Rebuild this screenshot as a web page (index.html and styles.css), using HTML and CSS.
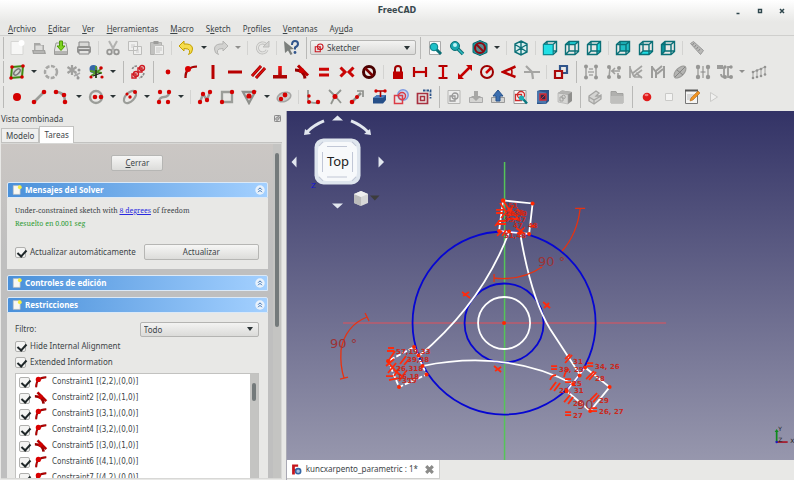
FILE: index.html
```
<!DOCTYPE html>
<html lang="es">
<head>
    <meta charset="UTF-8">
    <meta name="viewport" content="width=device-width, initial-scale=1.0">
    <title>FreeCAD</title>
    <link rel="stylesheet" href="styles.css">
</head>
<body>
    <!-- icon set, 16x16 each -->
    <svg class="sprite" aria-hidden="true">
        <defs>
            <linearGradient id="blade" x2="0" y2="1"><stop stop-color="#f01414"/><stop offset="1" stop-color="#a00000"/></linearGradient>
            <symbol id="i-new" viewBox="0 0 16 16"><path d="M2 1.500h12v13H2z" fill="#f7f7f6" stroke="#d6d6d4"/><circle cx="12.500" cy="3" r="3" fill="#fff"/></symbol>
            <symbol id="i-open" viewBox="0 0 16 16"><path d="M3 3h6l1 2h3v6H3z" fill="#a8a8a6"/><path d="M4.500 5.500h7v5h-7z" fill="#dcdcda"/><path d="M1 10h13l1 4H2z" fill="#a2a2a0"/><path d="M3 12h10" stroke="#c8c8c6"/></symbol>
            <symbol id="i-save" viewBox="0 0 16 16"><path d="M3 3h10l1.500 7v4.500h-13V10z" fill="#e4e4e2" stroke="#9b9b99"/><path d="M2 11h12v3H2z" fill="#b4b4b2"/><path d="M6.500 1h3v5H12l-4 4.500L4 6h2.500z" fill="#7ed321" stroke="#4e9a06"/></symbol>
            <symbol id="i-print" viewBox="0 0 16 16"><path d="M3 2h10v5H3z" fill="#d8d8d6" stroke="#888"/><rect x="1" y="6" width="14" height="7" rx="1.500" fill="#929290"/><path d="M2.500 8.500h11" stroke="#ddd"/><path d="M3 10.500h10v3.500H3z" fill="#e4e4e2" stroke="#888"/></symbol>
            <symbol id="i-cut" viewBox="0 0 16 16"><path d="M4 1l5 9M12 1L7 10" stroke="#b2b2b0" stroke-width="2"/><circle cx="4.500" cy="12" r="2.300" fill="none" stroke="#969694" stroke-width="1.800"/><circle cx="11.500" cy="12" r="2.300" fill="none" stroke="#969694" stroke-width="1.800"/></symbol>
            <symbol id="i-copy" viewBox="0 0 16 16"><path d="M1.500 1.500h9v9h-9zM6.500 6.500h8v8h-8z" fill="#efefee" stroke="#bdbdbb"/><path d="M4 5h4M4 7h3M9 10h3M9 12h3" stroke="#ccc"/></symbol>
            <symbol id="i-paste" viewBox="0 0 16 16"><path d="M1.500 2.500h11v12h-11z" fill="#c2c2c0" stroke="#b0b0ae"/><path d="M4.500 1h5v3h-5z" fill="#9c9c9a"/><path d="M5.500 5.500h9v9h-9z" fill="#efefee" stroke="#c0c0be"/><path d="M7 8h6M7 10h6M7 12h4" stroke="#c8c8c6"/></symbol>
            <symbol id="i-undo" viewBox="0 0 16 16"><path d="M1 6l5-5v3h3q5.500.5 5.500 5t-4 5.500q1.500-1.500 1-4Q11 8.500 6 8.500V11z" fill="#f5dc4c" stroke="#c4a000"/></symbol>
            <symbol id="i-redo" viewBox="0 0 16 16"><path d="M15 6l-5-5v3H7Q1.500 4.500 1.500 9t4 5.500Q4 13 4.500 10.500 5 8.500 10 8.500V11z" fill="#d2d2d0" stroke="#b4b4b2"/></symbol>
            <symbol id="i-refresh" viewBox="0 0 16 16"><path d="M13 10a5 5 0 1 1-1.500-6" fill="none" stroke="#bebebc" stroke-width="3"/><path d="M13 10a5 5 0 1 1-1.500-6" fill="none" stroke="#e4e4e2" stroke-width="1.300"/><path d="M9 7h6V1z" fill="#d4d4d2" stroke="#bcbcba"/></symbol>
            <symbol id="i-whats" viewBox="0 0 16 16"><path d="M1 1l10 8-4 .5 2.500 4.500-2 1L5 10.500 2 13z" fill="#7b7f7c"/><path d="M9 5q0-4 3-4t3 3q0 2-3 3.500v2" fill="none" stroke="#31558c" stroke-width="2"/><circle cx="12" cy="12.500" r="1.400" fill="#31558c"/></symbol>
            <symbol id="i-fit" viewBox="0 0 16 16"><path d="M2.500 1.500h11v13h-11z" fill="#fbfbfb" stroke="#aaa"/><path d="M9 9l5 5" stroke="#0b6f75" stroke-width="3"/><circle cx="7" cy="7" r="3.800" fill="#1fc1c9" stroke="#0b7f86"/></symbol>
            <symbol id="i-zoom" viewBox="0 0 16 16"><path d="M8 8l6 6" stroke="#0b6f75" stroke-width="3.500"/><path d="M8 8l6 6" stroke="#30bcc2" stroke-width="1.500"/><circle cx="6" cy="6" r="4.500" fill="#19a6ae" stroke="#0b6f75"/><circle cx="6" cy="5" r="2" fill="#bff3f5"/></symbol>
            <symbol id="i-style" viewBox="0 0 16 16"><path d="M8 .5l7 3v9l-7 3-7-3v-9z" fill="#16a0a8" stroke="#0c666c"/><circle cx="8" cy="8" r="5" fill="#5b8d90" stroke="#8c0b12" stroke-width="2.200"/><path d="M4.500 4.500l7 7" stroke="#8c0b12" stroke-width="2"/></symbol>
            <symbol id="i-iso" viewBox="0 0 16 16"><path d="M8 1l6 3v8l-6 3-6-3V4zM8 8v7M8 8L2 4.500M8 8l6-3.500M8 1v7M2 12l6-4 6 4" fill="#d9eeee" stroke="#0b7077" stroke-width="1.400"/></symbol>
            <symbol id="i-cube" viewBox="0 0 16 16"><path d="M1.500 4.500l3.500-3h9.500v10l-3.500 3H1.500zM1.500 4.500H11v10M11 4.500l3.500-3M5 1.500V11h9.500M5 11l-3.500 3.500" fill="none" stroke="#0b7077" stroke-width="1.400"/></symbol>
            <symbol id="i-front" viewBox="0 0 16 16"><use href="#i-cube"/><path d="M1.500 4.500H11v10H1.500z" fill="#22dfe5" stroke="#0b8c94"/></symbol>
            <symbol id="i-top" viewBox="0 0 16 16"><path d="M1.500 4.500l3.500-3h9.500l-3.500 3z" fill="#22dfe5"/><use href="#i-cube"/></symbol>
            <symbol id="i-right" viewBox="0 0 16 16"><path d="M11 4.500l3.500-3v10l-3.500 3z" fill="#22dfe5"/><use href="#i-cube"/></symbol>
            <symbol id="i-rear" viewBox="0 0 16 16"><path d="M5 1.500h9.500V11H5z" fill="#20bfc5"/><use href="#i-cube"/></symbol>
            <symbol id="i-bottom" viewBox="0 0 16 16"><path d="M1.500 14.500L5 11h9.500L11 14.500z" fill="#22dfe5"/><use href="#i-cube"/></symbol>
            <symbol id="i-left" viewBox="0 0 16 16"><path d="M1.500 4.500l3.500-3V11l-3.500 3.500z" fill="#0e969d"/><use href="#i-cube"/></symbol>
            <symbol id="i-ruler" viewBox="0 0 16 16"><path d="M1.500 3.500l3-2 10 9-3 4z" fill="#b9b9b7" stroke="#999"/><path d="M5 3L3.500 5M7 5L5.500 7M9 7L7.500 9M11 9l-1.500 2" stroke="#888"/></symbol>

            <symbol id="i-sketch" viewBox="0 0 16 16"><path d="M3 3l11-1-1 11-11 1z" fill="#d3d7cf" stroke="#3f8a12" stroke-width="2"/><ellipse cx="8" cy="8" rx="4" ry="2" transform="rotate(-45 8 8)" fill="none" stroke="#777" stroke-width="1.500"/><g fill="#d40000"><circle cx="3" cy="3" r="1.800"/><circle cx="14" cy="2" r="1.800"/><circle cx="13" cy="13" r="1.800"/><circle cx="2" cy="14" r="1.800"/></g></symbol>
            <symbol id="i-ring" viewBox="0 0 16 16"><circle cx="8" cy="8" r="6" fill="none" stroke="#a7a7a5" stroke-width="2.500" stroke-dasharray="4 1.500"/></symbol>
            <symbol id="i-spark" viewBox="0 0 16 16"><path d="M6 1v10M1.500 3l9 6M10.500 3l-9 6" stroke="#a0a09e" stroke-width="2.200"/><path d="M9 9l4 5M14 9l-6 3" stroke="#aaa" stroke-width="1.500"/><circle cx="13" cy="6" r="1.500" fill="#999"/><circle cx="12" cy="14" r="1.500" fill="#999"/></symbol>
            <symbol id="i-spark-c" viewBox="0 0 16 16"><circle cx="5.500" cy="5" r="4" fill="#3567a8"/><path d="M8 2v12M2 7l12 2M3 12l10-7" stroke="#529a28" stroke-width="1.800"/><path d="M8 6v8M5 12l8-3" stroke="#222" stroke-width="1.300"/><g fill="#c00"><circle cx="13" cy="4" r="1.800"/><circle cx="14" cy="13" r="1.600"/><circle cx="3" cy="13" r="1.600"/></g></symbol>
            <symbol id="i-merge" viewBox="0 0 16 16"><path d="M7 2q-4 0-5 4M14 9q-1 4-5 5" fill="none" stroke="#888" stroke-width="1.600" stroke-dasharray="2.500 1"/><g fill="none" stroke="#cf1a22" stroke-width="1.400"><path d="M8 4h4v4H8z"/><circle cx="12" cy="4" r="2.500"/><path d="M2 10h4v4H2z"/><circle cx="6" cy="10" r="2.500"/></g></symbol>
            <symbol id="i-dot" viewBox="0 0 16 16"><circle cx="8" cy="8" r="2.400" fill="#d40000"/></symbol>
            <symbol id="i-onobj" viewBox="0 0 16 16"><path d="M2.500 14Q2 3 14 2.500" fill="none" stroke="#8a0000" stroke-width="2.200"/><path d="M2.500 14Q2 3 14 2.500" fill="none" stroke="#c40000" stroke-width="1"/><circle cx="5" cy="5" r="3" fill="#d90000"/></symbol>
            <symbol id="i-vert" viewBox="0 0 16 16"><path d="M8 1v14" stroke="#b80000" stroke-width="3"/></symbol>
            <symbol id="i-horiz" viewBox="0 0 16 16"><path d="M1 8h14" stroke="#b80000" stroke-width="3"/></symbol>
            <symbol id="i-par" viewBox="0 0 16 16"><path d="M2 12l9-10M6 14l9-10" stroke="#9c0000" stroke-width="3"/><path d="M2 12l9-10M6 14l9-10" stroke="#df0e0e" stroke-width="1.500"/></symbol>
            <symbol id="i-perp" viewBox="0 0 16 16"><path d="M6.200 2h3.600v9H15v3.500H1V11h5.200z" fill="url(#blade)"/></symbol>
            <symbol id="i-tan" viewBox="0 0 16 16"><path d="M1 6q9 0 10 8.500" fill="none" stroke="#980000" stroke-width="3"/><path d="M4 1.500l10 10" stroke="#b70000" stroke-width="3"/><circle cx="7.500" cy="6.500" r="2.500" fill="#d40000"/></symbol>
            <symbol id="i-eq" viewBox="0 0 16 16"><path d="M3 5.300h10M3 11h10" stroke="#cc0505" stroke-width="3"/></symbol>
            <symbol id="i-sym" viewBox="0 0 16 16"><path d="M1.500 3.500L6 8l-4.500 4.500M14.500 3.500L10 8l4.500 4.500" fill="none" stroke="#c90505" stroke-width="3"/></symbol>
            <symbol id="i-block" viewBox="0 0 16 16"><circle cx="8" cy="8" r="5.500" fill="none" stroke="#480000" stroke-width="3"/><path d="M4 4l8 8" stroke="#7a0000" stroke-width="2.500"/></symbol>
            <symbol id="i-lock" viewBox="0 0 16 16"><path d="M5 8V5a3 3 0 0 1 6 0v3" fill="none" stroke="#a00000" stroke-width="2"/><path d="M3 7.500h10V15H3z" fill="#bd0000"/></symbol>
            <symbol id="i-hdist" viewBox="0 0 16 16"><path d="M2 3v10M14 3v10" stroke="#b00000" stroke-width="2.200"/><path d="M2 8h12" stroke="#c80000" stroke-width="2.200"/></symbol>
            <symbol id="i-vdist" viewBox="0 0 16 16"><path d="M3.500 2h9M3.500 14h9" stroke="#b00000" stroke-width="2.200"/><path d="M8 2v12" stroke="#c80000" stroke-width="2.200"/></symbol>
            <symbol id="i-dist" viewBox="0 0 16 16"><path d="M3 13L13 3" stroke="#c40000" stroke-width="2.500"/><path d="M15 1v6L9 1zM1 15V9l6 6z" fill="#c40000"/></symbol>
            <symbol id="i-radius" viewBox="0 0 16 16"><circle cx="8" cy="8" r="6" fill="none" stroke="#9d0000" stroke-width="2"/><path d="M7 9l5-5" stroke="#d20000" stroke-width="2.500"/></symbol>
            <symbol id="i-angle" viewBox="0 0 16 16"><path d="M14.500 2.500L2 8l12.500 5" fill="none" stroke="#b90000" stroke-width="2.500"/><path d="M10 4q2 4 0 8" fill="none" stroke="#b90000" stroke-width="1.500"/></symbol>
            <symbol id="i-snell" viewBox="0 0 16 16"><path d="M0 8h16M8 8l1 7M2 2l6 6" stroke="#a5a5a3" stroke-width="2.200"/></symbol>
            <symbol id="i-toggle" viewBox="0 0 16 16"><path d="M7 2h7v7H7z" fill="none" stroke="#30558b" stroke-width="2.200"/><path d="M2 7h7v7H2z" fill="#e8e8e6" stroke="#aa0909" stroke-width="2.200"/></symbol>

            <symbol id="i-g1" viewBox="0 0 16 16"><path d="M3 3v10M13 3v10M6 5h4M6 11h4M5 8h6" stroke="#a8a8a6" stroke-width="1.700" fill="none"/><g fill="#969694"><circle cx="3" cy="2.500" r="2"/><circle cx="13" cy="2.500" r="2"/><circle cx="3" cy="13.500" r="2"/><circle cx="13" cy="13.500" r="2"/></g></symbol>
            <symbol id="i-g2" viewBox="0 0 16 16"><path d="M4 4l-1 9M5 7h9M9 4l-3 3 3 3M12 13V9" fill="none" stroke="#a0a09e" stroke-width="1.600"/><g fill="#969694"><circle cx="3" cy="3" r="2"/><circle cx="3" cy="13" r="2"/><circle cx="13" cy="4" r="2"/><circle cx="13" cy="13" r="2"/></g></symbol>
            <symbol id="i-g3" viewBox="0 0 16 16"><path d="M2 2v12M2 4l4 9M5 9l9-7M6 12l8-6M8 9l6 5M6 13h8" stroke="#a3a3a1" stroke-width="1.700"/></symbol>
            <symbol id="i-g4" viewBox="0 0 16 16"><path d="M2 2v12M14 2v12M2 3l4 5v6M6 7l6-5M7 10l6-5" fill="none" stroke="#9d9d9b" stroke-width="2"/></symbol>
            <symbol id="i-g5" viewBox="0 0 16 16"><ellipse cx="8" cy="8" rx="7.500" ry="4" transform="rotate(-45 8 8)" fill="#b4b4b2" stroke="#989896"/><path d="M3 13L13 3M5 6l6 5" stroke="#858583"/></symbol>
            <symbol id="i-g6" viewBox="0 0 16 16"><path d="M3 3v10M13 3v10M8 2v12" stroke="#a5a5a3" stroke-width="1.500"/><path d="M5.500 8h5" stroke="#888"/><g fill="#979795"><circle cx="3" cy="3" r="2.200"/><circle cx="13" cy="3" r="2.200"/><circle cx="3" cy="13" r="2.200"/><circle cx="13" cy="13" r="2.200"/></g></symbol>
            <symbol id="i-g7" viewBox="0 0 16 16"><path d="M0 2h6M0 4h6M7 3v10q-3 0-3-3M14 3h-3v10h3" fill="none" stroke="#9c9c9a" stroke-width="1.800"/><g fill="#969694"><circle cx="8" cy="3" r="1.700"/><circle cx="14" cy="3" r="1.700"/><circle cx="8" cy="13" r="2"/><circle cx="14" cy="13" r="2"/></g></symbol>
            <symbol id="i-g8" viewBox="0 0 16 16"><path d="M2 8v6M6 7v6M10 6v6M14 3v8M2 8l12-5" stroke="#a2a2a0" stroke-width="1"/><g fill="#939391"><circle cx="2" cy="8" r="1.300"/><circle cx="6" cy="6.500" r="1.300"/><circle cx="10" cy="5" r="1.300"/><circle cx="14" cy="3" r="1.300"/><circle cx="2" cy="14" r="1.300"/><circle cx="6" cy="13" r="1.300"/><circle cx="10" cy="12" r="1.300"/><circle cx="14" cy="10.500" r="1.300"/></g></symbol>

            <symbol id="i-point" viewBox="0 0 16 16"><circle cx="8" cy="8" r="4" fill="#d40000"/></symbol>
            <symbol id="i-line" viewBox="0 0 16 16"><path d="M3 13L13 3" stroke="#9b9d99" stroke-width="2.600"/><g fill="#d40000"><circle cx="3" cy="13" r="2.300"/><circle cx="13" cy="3" r="2.300"/></g></symbol>
            <symbol id="i-arc" viewBox="0 0 16 16"><path d="M3 3q9 0 9 10" fill="none" stroke="#9b9d99" stroke-width="2.500"/><g fill="#d40000"><circle cx="3" cy="3" r="2.300"/><circle cx="12" cy="13" r="2.300"/><circle cx="11" cy="6" r="2.300"/></g></symbol>
            <symbol id="i-circle" viewBox="0 0 16 16"><circle cx="8" cy="8" r="6" fill="none" stroke="#9b9d99" stroke-width="2.400"/><g fill="#d40000"><circle cx="7" cy="8" r="2.300"/><circle cx="13" cy="8" r="2.300"/></g></symbol>
            <symbol id="i-ellipse" viewBox="0 0 16 16"><ellipse cx="8" cy="8" rx="7.500" ry="4.300" transform="rotate(-45 8 8)" fill="none" stroke="#9b9d99" stroke-width="2.200"/><g fill="#d40000"><circle cx="13" cy="3" r="2"/><circle cx="8" cy="8" r="1.700"/><circle cx="5" cy="5" r="1.500"/></g></symbol>
            <symbol id="i-bspline" viewBox="0 0 16 16"><path d="M3 13q0-5 5-5t5-5" fill="none" stroke="#9b9d99" stroke-width="2.400"/><g fill="#d40000"><circle cx="4" cy="3" r="2.200"/><circle cx="13" cy="3" r="2.200"/><circle cx="3" cy="13" r="2.200"/><circle cx="12" cy="13" r="2.200"/></g></symbol>
            <symbol id="i-poly" viewBox="0 0 16 16"><path d="M3 13l3-8 4 6 3-8" fill="none" stroke="#9b9d99" stroke-width="2.400"/><g fill="#d40000"><circle cx="3" cy="13" r="2.200"/><circle cx="6" cy="5" r="2.200"/><circle cx="10" cy="11" r="2.200"/><circle cx="13" cy="3" r="2.200"/></g></symbol>
            <symbol id="i-rect" viewBox="0 0 16 16"><path d="M3 3h10v10H3z" fill="none" stroke="#9b9d99" stroke-width="2.300"/><g fill="#d40000"><circle cx="3" cy="13" r="2.200"/><circle cx="13" cy="3" r="2.200"/></g></symbol>
            <symbol id="i-tri" viewBox="0 0 16 16"><path d="M2 3h12L8 14z" fill="none" stroke="#8f918d" stroke-width="2.300"/><g fill="#d40000"><circle cx="8" cy="7" r="2.600"/><circle cx="13" cy="3" r="2.200"/></g></symbol>
            <symbol id="i-slot" viewBox="0 0 16 16"><ellipse cx="8" cy="8" rx="7" ry="4.500" transform="rotate(-20 8 8)" fill="#cbcbc9" stroke="#a5a5a3" stroke-width="1.500"/><g fill="#d40000"><circle cx="5" cy="10" r="2.200"/><circle cx="9" cy="6" r="2.400"/></g></symbol>
            <symbol id="i-fillet" viewBox="0 0 16 16"><path d="M3 1v10q0 3 10 3" fill="none" stroke="#9b9d99" stroke-width="2"/><g fill="#d40000"><circle cx="4" cy="13" r="2"/><circle cx="4" cy="7" r="1.700"/><circle cx="13" cy="13" r="2.200"/></g></symbol>
            <symbol id="i-trim" viewBox="0 0 16 16"><path d="M2 1l6 6M8 7l6-6M8 7l-4 8M9 8l5 6" stroke="#92948f" stroke-width="1.800"/><circle cx="8" cy="7.500" r="2.500" fill="#d40000"/></symbol>
            <symbol id="i-extend" viewBox="0 0 16 16"><path d="M3 13l9-9" stroke="#8e908c" stroke-width="2.500"/><path d="M8 2h6v6" fill="none" stroke="#8e908c" stroke-width="1.700"/><g fill="#d40000"><circle cx="3" cy="13" r="2.300"/><circle cx="8" cy="8" r="2"/></g></symbol>
            <symbol id="i-ext" viewBox="0 0 16 16"><path d="M2 9l4-3h9v5l-3 3.500H2z" fill="#264f88"/><path d="M2 9l4-3h9l-3 3z" fill="#4b7ebd"/><path d="M5 2h9M9.500 2v6" stroke="#a00" stroke-width="1.600"/><circle cx="5" cy="2" r="1.700" fill="#d40000"/><circle cx="14" cy="2" r="1.700" fill="#d40000"/></symbol>
            <symbol id="i-carbon" viewBox="0 0 16 16"><circle cx="10" cy="6" r="5.200" fill="#c9d6f0" stroke="#7e9ae0" stroke-width="1.500"/><path d="M1.500 6.500h8v8h-8z" fill="none" stroke="#dc3c46" stroke-width="1.500"/><circle cx="9" cy="7" r="3.500" fill="none" stroke="#dc3c46" stroke-width="1.400"/></symbol>
            <symbol id="i-constr" viewBox="0 0 16 16"><path d="M7 1.500h7.500v8" fill="none" stroke="#2c548a" stroke-width="1.800" stroke-dasharray="2.500 1"/><path d="M1.500 4.500h10v10h-10z" fill="none" stroke="#a83040" stroke-width="1.700"/><path d="M4.500 7.500h4v4h-4z" fill="none" stroke="#a83040" stroke-width="1.500"/></symbol>
            <symbol id="i-leave" viewBox="0 0 16 16"><path d="M2 1.500h12v13H2z" fill="#ededec" stroke="#b6b6b4"/><path d="M4 7h5v5H4z" fill="none" stroke="#999" stroke-width="1.300"/><circle cx="9" cy="7" r="3" fill="none" stroke="#999" stroke-width="1.300"/></symbol>
            <symbol id="i-down" viewBox="0 0 16 16"><path d="M1.500 8.500h13v5h-13z" fill="#d4d4d2" stroke="#aaa"/><path d="M6 2h4v5h3l-5 5-5-5h3z" fill="#a7a7a5"/></symbol>
            <symbol id="i-up" viewBox="0 0 16 16"><path d="M1.500 8.500h13v5h-13z" fill="#d4d4d2" stroke="#999"/><path d="M6 12h4V7h3L8 1 3 7h3z" fill="#3b6eaf" stroke="#28528a"/></symbol>
            <symbol id="i-view" viewBox="0 0 16 16"><path d="M2 1.500h12v13H2z" fill="#fafafa" stroke="#999"/><path d="M3.500 5.500h6v6h-6z" fill="none" stroke="#cf2a2a" stroke-width="1.300"/><circle cx="9" cy="6" r="3.500" fill="none" stroke="#cf2a2a" stroke-width="1.300"/><path d="M11 10l4 4.500" stroke="#0a7880" stroke-width="2.500"/><circle cx="9.500" cy="9" r="2.600" fill="#1daeb5"/></symbol>
            <symbol id="i-section" viewBox="0 0 16 16"><path d="M2 2l3-1h9v11l-3 3H2z" fill="#2c548a"/><path d="M2 2l9 1.500V15L2 13.500z" fill="#4b77ad"/><path d="M5 5h6v6H5z" fill="#312a4a" stroke="#d22b36" stroke-width="1.400"/><path d="M5 11l6-6" stroke="#d22b36"/></symbol>
            <symbol id="i-map" viewBox="0 0 16 16"><path d="M1 4l4-2.500 10 1.500v9L11 15z" fill="#8f8f8d"/><path d="M1 4l10 1.500V15L1 13z" fill="#d6d6d4" stroke="#aaa" stroke-width=".6"/><path d="M1 4l4-2.500 10 1.500-4 2.500z" fill="#b4b4b2"/><path d="M3 8h3v4H3z" fill="none" stroke="#a2a2a0"/><circle cx="6.500" cy="8" r="1.800" fill="none" stroke="#a2a2a0"/></symbol>
            <symbol id="i-part" viewBox="0 0 16 16"><path d="M2 7l7-5 3 2-3 3 3 0 2-1v4l-7 5-5-3z" fill="#d4d4d2" stroke="#a5a5a3" stroke-width="1.300"/><path d="M2 8l5 3 7-4M7 11v4" fill="none" stroke="#a5a5a3" stroke-width="1.300"/></symbol>
            <symbol id="i-folder" viewBox="0 0 16 16"><path d="M2 2.500h5l1 2h6v9.500H2z" fill="#b0b0ae" stroke="#a2a2a0"/><path d="M2 7h12v7H2z" fill="#bfbfbd"/></symbol>
            <symbol id="i-rec" viewBox="0 0 16 16"><circle cx="8" cy="8" r="4.300" fill="#e01b1b"/><ellipse cx="7.500" cy="6" rx="2" ry="1.200" fill="#f47a7a"/></symbol>
            <symbol id="i-stop" viewBox="0 0 16 16"><path d="M4.500 4.500h7v7h-7z" fill="#f4f4f3" stroke="#cacac8"/></symbol>
            <symbol id="i-macro" viewBox="0 0 16 16"><path d="M1.500 1.500h12v13h-12z" fill="#f5f5f4" stroke="#777"/><path d="M1 1.500h13" stroke="#555" stroke-width="2"/><path d="M3 6h7M3 8h5M3 10h4" stroke="#bbb"/><path d="M6 12l1-3 7-7 2 2-7 7z" fill="#ef9322" stroke="#b0681a" stroke-width=".6"/></symbol>
            <symbol id="i-play" viewBox="0 0 16 16"><path d="M4.500 3.500l7 4.500-7 4.500z" fill="#f0f0ef" stroke="#cbcbc9"/></symbol>
            <symbol id="i-sk" viewBox="0 0 16 16"><path d="M2 6h8v8H2z" fill="none" stroke="#cb1620" stroke-width="1.700"/><circle cx="10" cy="6" r="4.500" fill="none" stroke="#cb1620" stroke-width="1.700"/><path d="M5 11l5-5" stroke="#cb1620"/></symbol>
            <symbol id="i-task" viewBox="0 0 16 16"><path d="M2 1h11v14H2z" fill="#f8f8f2" stroke="#bbb"/><circle cx="12.500" cy="3.500" r="3" fill="#f7ee3e"/></symbol>
            <symbol id="i-fold" viewBox="0 0 16 16"><circle cx="8" cy="8" r="7.500" fill="#e9f2fb"/><path d="M5 7.500l3-3 3 3M5 11.500l3-3 3 3" fill="none" stroke="#3971b4" stroke-width="1.600"/></symbol>
        </defs>
    </svg>

    <header class="titlebar">
        <h1>FreeCAD</h1>
        <div class="window-btns">
            <button aria-label="Minimizar"><svg viewBox="0 0 8 8"><path d="M2.500 6.500h3" stroke="#2e464c" stroke-width="1.500"/></svg></button>
            <button aria-label="Maximizar"><svg viewBox="0 0 8 8"><path d="M2.500 2.500h3v3h-3z" fill="none" stroke="#2e464c" stroke-width="1.400"/></svg></button>
            <button aria-label="Cerrar ventana"><svg viewBox="0 0 8 8"><path d="M2 2l4 4M6 2L2 6" stroke="#2e464c" stroke-width="1.500"/></svg></button>
        </div>
    </header>

    <nav class="menubar">
        <a href="#"><u>A</u>rchivo</a>
        <a href="#"><u>E</u>ditar</a>
        <a href="#"><u>V</u>er</a>
        <a href="#"><u>H</u>erramientas</a>
        <a href="#"><u>M</u>acro</a>
        <a href="#">S<u>k</u>etch</a>
        <a href="#">P<u>r</u>ofiles</a>
        <a href="#"><u>V</u>entanas</a>
        <a href="#">Ay<u>u</u>da</a>
    </nav>

    <div class="toolbars">
        <div class="toolbar row-file">
            <i class="handle"></i>
            <button aria-label="Nuevo"><svg><use href="#i-new"/></svg></button>
            <button aria-label="Abrir"><svg><use href="#i-open"/></svg></button>
            <button aria-label="Guardar"><svg><use href="#i-save"/></svg></button>
            <button aria-label="Imprimir"><svg><use href="#i-print"/></svg></button>
            <i class="sep"></i>
            <button aria-label="Cortar"><svg><use href="#i-cut"/></svg></button>
            <button aria-label="Copiar"><svg><use href="#i-copy"/></svg></button>
            <button aria-label="Pegar"><svg><use href="#i-paste"/></svg></button>
            <i class="sep"></i>
            <button aria-label="Deshacer"><svg><use href="#i-undo"/></svg></button>
            <button class="more" aria-label="Lista deshacer"></button>
            <button aria-label="Rehacer"><svg><use href="#i-redo"/></svg></button>
            <button class="more off" aria-label="Lista rehacer"></button>
            <i class="sep"></i>
            <button aria-label="Refrescar"><svg><use href="#i-refresh"/></svg></button>
            <i class="sep"></i>
            <button aria-label="Ayuda"><svg><use href="#i-whats"/></svg></button>
            <i class="handle"></i>
            <div class="combo workbench">
                <svg><use href="#i-sk"/></svg>
                <select aria-label="Banco de trabajo"><option>Sketcher</option></select>
            </div>
            <i class="handle"></i>
            <button aria-label="Ajustar todo"><svg><use href="#i-fit"/></svg></button>
            <button aria-label="Ajustar selección"><svg><use href="#i-zoom"/></svg></button>
            <button aria-label="Estilo"><svg><use href="#i-style"/></svg></button>
            <button class="more" aria-label="Estilos"></button>
            <i class="sep"></i>
            <button aria-label="Isométrica"><svg><use href="#i-iso"/></svg></button>
            <i class="sep"></i>
            <button aria-label="Frontal"><svg><use href="#i-front"/></svg></button>
            <button aria-label="Superior"><svg><use href="#i-top"/></svg></button>
            <button aria-label="Derecha"><svg><use href="#i-right"/></svg></button>
            <i class="sep"></i>
            <button aria-label="Posterior"><svg><use href="#i-rear"/></svg></button>
            <button aria-label="Inferior"><svg><use href="#i-bottom"/></svg></button>
            <button aria-label="Izquierda"><svg><use href="#i-left"/></svg></button>
            <i class="sep"></i>
            <button aria-label="Medir"><svg><use href="#i-ruler"/></svg></button>
        </div>

        <div class="toolbar row-constraints">
            <i class="handle"></i>
            <button aria-label="Croquis"><svg><use href="#i-sketch"/></svg></button>
            <button class="more" aria-label="Opciones de croquis"></button>
            <button aria-label="Cerrar forma"><svg><use href="#i-ring"/></svg></button>
            <button aria-label="Conectar"><svg><use href="#i-spark"/></svg></button>
            <button aria-label="Seleccionar"><svg><use href="#i-spark-c"/></svg></button>
            <button class="more" aria-label="Más selección"></button>
            <i class="handle"></i>
            <button aria-label="Espacio virtual"><svg><use href="#i-merge"/></svg></button>
            <i class="handle"></i>
            <button aria-label="Coincidente"><svg><use href="#i-dot"/></svg></button>
            <button aria-label="Punto en objeto"><svg><use href="#i-onobj"/></svg></button>
            <button aria-label="Vertical"><svg><use href="#i-vert"/></svg></button>
            <button aria-label="Horizontal"><svg><use href="#i-horiz"/></svg></button>
            <button aria-label="Paralelo"><svg><use href="#i-par"/></svg></button>
            <button aria-label="Perpendicular"><svg><use href="#i-perp"/></svg></button>
            <button aria-label="Tangente"><svg><use href="#i-tan"/></svg></button>
            <button aria-label="Igual"><svg><use href="#i-eq"/></svg></button>
            <button aria-label="Simétrico"><svg><use href="#i-sym"/></svg></button>
            <button aria-label="Bloquear"><svg><use href="#i-block"/></svg></button>
            <i class="sep"></i>
            <button aria-label="Fijar"><svg><use href="#i-lock"/></svg></button>
            <button aria-label="Distancia horizontal"><svg><use href="#i-hdist"/></svg></button>
            <button aria-label="Distancia vertical"><svg><use href="#i-vdist"/></svg></button>
            <button aria-label="Distancia"><svg><use href="#i-dist"/></svg></button>
            <button aria-label="Radio"><svg><use href="#i-radius"/></svg></button>
            <button aria-label="Ángulo"><svg><use href="#i-angle"/></svg></button>
            <button aria-label="Refracción"><svg><use href="#i-snell"/></svg></button>
            <i class="sep"></i>
            <button aria-label="Alternar restricción"><svg><use href="#i-toggle"/></svg></button>
            <i class="handle"></i>
            <button aria-label="Seleccionar asociadas"><svg><use href="#i-g1"/></svg></button>
            <button aria-label="Seleccionar elementos"><svg><use href="#i-g2"/></svg></button>
            <button aria-label="Redundantes"><svg><use href="#i-g3"/></svg></button>
            <button aria-label="Conflictos"><svg><use href="#i-g4"/></svg></button>
            <button aria-label="Geometría interna"><svg><use href="#i-g5"/></svg></button>
            <button aria-label="Simetría"><svg><use href="#i-g6"/></svg></button>
            <button aria-label="Clonar"><svg><use href="#i-g7"/></svg></button>
            <button class="more off" aria-label="Más copias"></button>
            <button aria-label="Matriz"><svg><use href="#i-g8"/></svg></button>
        </div>

        <div class="toolbar row-geometry">
            <i class="handle"></i>
            <button aria-label="Punto"><svg><use href="#i-point"/></svg></button>
            <button aria-label="Línea"><svg><use href="#i-line"/></svg></button>
            <button aria-label="Arco"><svg><use href="#i-arc"/></svg></button>
            <button class="more" aria-label="Más arcos"></button>
            <button aria-label="Círculo"><svg><use href="#i-circle"/></svg></button>
            <button class="more" aria-label="Más círculos"></button>
            <button aria-label="Elipse"><svg><use href="#i-ellipse"/></svg></button>
            <button class="more" aria-label="Más cónicas"></button>
            <button aria-label="B-spline"><svg><use href="#i-bspline"/></svg></button>
            <button class="more" aria-label="Más B-splines"></button>
            <i class="sep"></i>
            <button aria-label="Polilínea"><svg><use href="#i-poly"/></svg></button>
            <button aria-label="Rectángulo"><svg><use href="#i-rect"/></svg></button>
            <button aria-label="Polígono"><svg><use href="#i-tri"/></svg></button>
            <button class="more" aria-label="Más polígonos"></button>
            <button aria-label="Ranura"><svg><use href="#i-slot"/></svg></button>
            <i class="sep"></i>
            <button aria-label="Redondeo"><svg><use href="#i-fillet"/></svg></button>
            <button aria-label="Recortar"><svg><use href="#i-trim"/></svg></button>
            <button aria-label="Extender"><svg><use href="#i-extend"/></svg></button>
            <button aria-label="Geometría externa"><svg><use href="#i-ext"/></svg></button>
            <button aria-label="Copia de carbón"><svg><use href="#i-carbon"/></svg></button>
            <button aria-label="Construcción"><svg><use href="#i-constr"/></svg></button>
            <i class="handle"></i>
            <button aria-label="Nuevo croquis"><svg><use href="#i-leave"/></svg></button>
            <button aria-label="Editar croquis"><svg><use href="#i-down"/></svg></button>
            <button aria-label="Salir del croquis"><svg><use href="#i-up"/></svg></button>
            <button aria-label="Ver croquis"><svg><use href="#i-view"/></svg></button>
            <button aria-label="Ver sección"><svg><use href="#i-section"/></svg></button>
            <button aria-label="Mapear croquis"><svg><use href="#i-map"/></svg></button>
            <i class="handle"></i>
            <button aria-label="Pieza"><svg><use href="#i-part"/></svg></button>
            <button aria-label="Grupo"><svg><use href="#i-folder"/></svg></button>
            <i class="handle"></i>
            <button aria-label="Grabar macro"><svg><use href="#i-rec"/></svg></button>
            <button aria-label="Parar macro"><svg><use href="#i-stop"/></svg></button>
            <button aria-label="Macros"><svg><use href="#i-macro"/></svg></button>
            <button aria-label="Ejecutar macro"><svg><use href="#i-play"/></svg></button>
        </div>
    </div>

    <main class="workspace">
        <aside class="panel">
            <div class="panel-title">
                <span>Vista combinada</span>
                <button aria-label="Desacoplar"><svg viewBox="0 0 8 8"><rect x=".5" y=".5" width="7" height="7" rx="1" fill="#ddd" stroke="#777"/><circle cx="3.500" cy="4.500" r="1.500" fill="none" stroke="#777"/><path d="M4 2h2v2" fill="none" stroke="#777"/></svg></button>
            </div>
            <div class="tabs">
                <button>Modelo</button>
                <button class="current">Tareas</button>
            </div>
            <div class="scroll">
                <div class="tasks">
                    <button class="btn close"><u>C</u>errar</button>

                    <section class="task">
                        <h2><svg><use href="#i-task"/></svg>Mensajes del Solver<svg class="fold"><use href="#i-fold"/></svg></h2>
                        <div class="task-body">
                            <p class="msg">Under-constrained sketch with <a href="#">8 degrees</a> of freedom</p>
                            <p class="msg solved">Resuelto en 0.001 seg</p>
                            <div class="split update">
                                <label><input type="checkbox" checked>Actualizar automáticamente</label>
                                <button class="btn">Actualizar</button>
                            </div>
                        </div>
                    </section>

                    <section class="task">
                        <h2><svg><use href="#i-task"/></svg>Controles de edición<svg class="fold"><use href="#i-fold"/></svg></h2>
                    </section>

                    <section class="task">
                        <h2><svg><use href="#i-task"/></svg>Restricciones<svg class="fold"><use href="#i-fold"/></svg></h2>
                        <div class="task-body">
                            <div class="split filter">
                                <label for="filtro">Filtro:</label>
                                <div class="combo"><select id="filtro"><option>Todo</option></select></div>
                            </div>
                            <label><input type="checkbox" checked>Hide Internal Alignment</label>
                            <label><input type="checkbox" checked>Extended Information</label>
                            <div class="list">
                                <ul>
                                    <li><label><input type="checkbox" checked><svg><use href="#i-onobj"/></svg>Constraint1 [(2,2),(0,0)]</label></li>
                                    <li><label><input type="checkbox" checked><svg><use href="#i-tan"/></svg>Constraint2 [(2,0),(1,0)]</label></li>
                                    <li><label><input type="checkbox" checked><svg><use href="#i-onobj"/></svg>Constraint3 [(3,1),(0,0)]</label></li>
                                    <li><label><input type="checkbox" checked><svg><use href="#i-onobj"/></svg>Constraint4 [(3,2),(0,0)]</label></li>
                                    <li><label><input type="checkbox" checked><svg><use href="#i-tan"/></svg>Constraint5 [(3,0),(1,0)]</label></li>
                                    <li><label><input type="checkbox" checked><svg><use href="#i-onobj"/></svg>Constraint6 [(4,1),(0,0)]</label></li>
                                    <li><label><input type="checkbox" checked><svg><use href="#i-onobj"/></svg>Constraint7 [(4,2),(0,0)]</label></li>
                                </ul>
                                <div class="bar"><i></i></div>
                            </div>
                        </div>
                    </section>
                </div>
                <div class="bar main-bar"><i></i></div>
            </div>
        </aside>

        <section class="viewer">
            <svg class="scene" viewBox="287 111 507 349" preserveAspectRatio="xMidYMid slice">
                <!-- axes -->
                <path d="M504.500 162v298" stroke="#55c458" stroke-width="1.500"/>
                <path d="M343 323h323" stroke="#bd5b6d" stroke-width="1.300"/>
                <!-- construction circles -->
                <g fill="none" stroke="#0606d2" stroke-width="1.800">
                    <circle cx="504" cy="323" r="91.500"/>
                    <circle cx="504" cy="323" r="39.500"/>
                </g>
                <!-- profile -->
                <g fill="none" stroke="#fff" stroke-width="1.800">
                    <circle cx="504" cy="323" r="26"/>
                    <path d="M509 232Q482 303 419 356"/>
                    <path d="M520 233Q531 298 550 329L580 375"/>
                    <path d="M422 366Q506 349 573 384"/>
                    <path d="M503 200.500l29.500 3L529 234l-30-3z"/>
                    <path d="M414 347l12.500 27.500L399 387l-11-26z" stroke-dasharray="5 2"/>
                    <path d="M585 367.500L609.500 387 590 411l-23.500-20z"/>
                </g>
                <g fill="none" stroke="#e83210" stroke-width="1.300">
                    <path d="M580 209q-3 25-18 42M542 267q-21 14-48 11M575 208.500h10M494 274v8"/>
                    <path d="M367 317q-22 9-26 33-1 16 3 28M365 313l4 8M340 379l8-2"/>
                </g>
                <g class="angle">
                    <text x="538" y="266">90 °</text>
                    <text x="330" y="348">90 °</text>
                    <text class="small" x="577" y="409">90</text>
                </g>
                <!-- constraint marks -->
                <g stroke="#ff2a0c" stroke-width="1.800" fill="none">
                    <path d="M462 292l8 6M463 296l6-4M543 302l7 6M544 308l5-5M494 366l7 6M495 371l6-4"/>
                    <path d="M496 210h7M496 213h7M498 221h8M497 224h9M500 203l6 9M504 202l8 12M508 208l9 8M513 205l-5 12M501 218l8-9M495 226l4-5M506 215h12M507 219h11M511 210l8 10M517 209l7 7M497 236l5-5M502 236l4-6M516 228l9 6M524 228l-7 6"/>
                    <path d="M388 348h6M387 351h7M389 360l6-9M386 366l8-7M387 361l8 9M388 373l8-10M394 376l6-9M386 376h7M400 364l6-8M404 365l5-6M394 370l9 7M399 381l7-10M389 380l9-2"/>
                    <path d="M565 359l5-5M565 363l7-8M551 366h6M551 369h6M587 363h6M587 366h6M565 379h6M565 382h6M586 379l8-8M589 380l7-8M550 390l6-8M554 391l6-8M550 380q1-5 6-5M564 377q1-6 5-8M590 400l7-7M593 402l6-7M564 402l6-7M568 404l5-7M565 412h6M565 415h6M591 408h6M591 411h6"/>
                </g>
                <g class="tags">
                    <text x="508" y="208">51</text><text x="505" y="216">26,49</text><text x="514" y="215">33</text><text x="504" y="222">45,47</text><text x="513" y="228">47, 48</text><text x="504" y="238">51,48</text>
                    <text x="396" y="354">57,19,33</text><text x="407" y="362">39,38</text><text x="396" y="371">26,318</text><text x="397" y="379">16,18</text><text x="402" y="383">319</text>
                    <text x="573" y="364">31</text><text x="595" y="369">34, 26</text><text x="595" y="381">28</text><text x="559" y="372">38, 25</text><text x="572" y="386">25</text><text x="559" y="393">28, 31</text><text x="599" y="403">29</text><text x="573" y="406">28</text><text x="573" y="418">27</text><text x="599" y="414">26, 27</text>
                </g>
                <g fill="#ff2600">
                    <circle cx="504" cy="323" r="2"/><circle cx="503" cy="200.500" r="2.200"/><circle cx="532.500" cy="203.500" r="2"/><circle cx="529" cy="234" r="2"/><circle cx="499" cy="231" r="2"/><circle cx="509" cy="231.500" r="2"/><circle cx="520" cy="233" r="2"/><circle cx="533" cy="226" r="1.500"/>
                    <circle cx="414" cy="347" r="2"/><circle cx="418.500" cy="355.500" r="2"/><circle cx="422.500" cy="366" r="2"/><circle cx="426.500" cy="374.500" r="2"/><circle cx="399" cy="387" r="2"/><circle cx="388" cy="361" r="2"/>
                    <circle cx="585" cy="367.500" r="2"/><circle cx="579.500" cy="375.500" r="2"/><circle cx="573" cy="384" r="2"/><circle cx="566.500" cy="391" r="2"/><circle cx="609.500" cy="387" r="2"/><circle cx="590" cy="411" r="2"/>
                </g>
                <!-- navigation cube -->
                <g fill="#e2e7ef">
                    <path d="M332 120.500l5.500-5 5.500 5zM332 203.500l5.500 5 5.500-5zM296.500 156.500v11l-5-5.500zM378.500 156.500v11l5.500-5.500z"/>
                    <path d="M304 135l1-6 6 5zM371 135l-1-6-6 5z"/>
                </g>
                <path d="M307 132q7-7 17-11M368 132q-7-7-17-11" fill="none" stroke="#e2e7ef" stroke-width="3"/>
                <rect x="314.500" y="138.500" width="46" height="46" rx="9" fill="#dfe6ee"/>
                <rect x="318" y="142" width="39" height="39" rx="8" fill="#f7f9fb"/>
                <path d="M327 146.500h20M327 177h20M322.500 152v20M352.500 152v20M319 146l4-4M352 142l4 4M319 177l4 4M352 181l4-4" fill="none" stroke="#c1c7d6"/>
                <text class="cube" x="338" y="166">Top</text>
                <text class="axis-z" x="311" y="188">Z</text>
                <path d="M354 194l7-3 7 3v9l-7 3-7-3z" fill="#d7d7d7"/><path d="M354 194l7 3v9l-7-3z" fill="#bbb"/><path d="M354 194l7-3 7 3-7 3z" fill="#f0f0f0"/>
                <path d="M370 195.500h9.500l-4.700 5z" fill="#3c3c3c"/>
                <!-- origin cross -->
                <path d="M776.500 442v-11" stroke="#0f8a1c" stroke-width="1.700"/><path d="M776.500 442h11" stroke="#a5182a" stroke-width="1.700"/><path d="M774.500 432l2-3 2 3z" fill="#0f8a1c"/><circle cx="776.500" cy="442" r="1.200" fill="#1a1ac0"/>
                <g class="axes"><text x="778" y="431">Y</text><text x="778" y="442">Z</text><text x="790" y="443">X</text></g>
            </svg>
            <div class="doc-tabs">
                <div class="doc-tab">
                    <svg viewBox="0 0 10 10"><path d="M1 .5h5.500v2h-3v2h2v2h-2v3H1z" fill="#c5161d"/><circle cx="6.500" cy="6.500" r="2.300" fill="#aac3e0" stroke="#3465a4" stroke-width="1.400"/></svg>
                    <span>kuncxarpento_parametric : 1*</span>
                    <button aria-label="Cerrar documento"><svg viewBox="0 0 10 10"><path d="M2 2l6 6M8 2L2 8" stroke="#8b8b89" stroke-width="2.800"/></svg></button>
                </div>
            </div>
        </section>
    </main>
</body>
</html>
```

FILE: styles.css
```
*{
    margin: 0;
    padding: 0;
    box-sizing: border-box;
}
body{
    display: flex;
    flex-direction: column;
    height: 100vh;
    overflow: hidden;
    background: #e8e8e6;
    color: #3c4447;
    font: 8px/12px "Noto Sans", "Open Sans", sans-serif;
}
button,select,input{
    font: inherit;
    color: inherit;
    border: none;
    background: none;
}
ul{
    list-style: none;
}
svg{
    display: block;
    flex: none;
}
.sprite{
    position: absolute;
    width: 0;
    height: 0;
}

/* title + menu */
.titlebar{
    display: flex;
    align-items: center;
    height: 22px;
    padding: 0 6px 0 62px;
    background: linear-gradient(#ffffff, #e8e8e6);
}
.titlebar h1{
    flex: 1;
    text-align: center;
    font: bold 8px/12px "DejaVu Sans", sans-serif;
    color: #39494e;
}
.window-btns{
    display: flex;
    gap: 10px;
}
.window-btns button{
    width: 12px;
    height: 12px;
    padding: 2px;
}
.menubar{
    display: flex;
    gap: 12px;
    height: 14px;
    padding: 1px 8px 0;
    border-bottom: 1px solid #cfcfcd;
}
.menubar a{
    color: inherit;
    text-decoration: none;
}

/* toolbars */
.toolbars{
    padding-bottom: 2px;
}
.toolbar{
    display: flex;
    align-items: center;
    height: 25px;
}
.toolbar.row-file{
    height: 23px;
}
.row-file{
    padding-right: 86px;
}
.row-constraints{
    padding-right: 24px;
}
.row-geometry{
    padding-right: 69px;
}
.toolbar button{
    display: flex;
    justify-content: center;
    flex: 1 1 22px;
    max-width: 24px;
    min-width: 0;
}
.toolbar button svg{
    width: 16px;
    height: 16px;
}
.toolbar .more{
    flex: none;
    width: 12px;
    height: 16px;
    align-items: center;
}
.more::before{
    content: "";
    border: 3px solid transparent;
    border-top-color: #2b3436;
    border-bottom-width: 0;
}
.more.off::before{
    border-top-color: #8f8f8d;
}
.handle{
    flex: none;
    width: 8px;
    height: 22px;
    background: linear-gradient(#b9b9b7, #b9b9b7) 4px 0/1px 100% no-repeat;
}
.handle:first-child{
    width: 6px;
    background-position: 3px 0;
}
.sep{
    flex: none;
    width: 7px;
    height: 14px;
    background: linear-gradient(#d3d3d1, #d3d3d1) 3px 0/1px 100% no-repeat;
}

/* combos and push buttons */
.combo{
    position: relative;
    display: flex;
    align-items: center;
    height: 15px;
    border: 1px solid #b4b4b2;
    border-radius: 2px;
    background: linear-gradient(#f3f3f2, #dbdbd9);
}
.combo select{
    flex: 1;
    height: 13px;
    padding: 0 3px;
    appearance: none;
    line-height: 13px;
}
.combo::after{
    content: "";
    position: absolute;
    right: 5px;
    border: 3px solid transparent;
    border-top: 4px solid #2b3436;
    border-bottom-width: 0;
    pointer-events: none;
}
.workbench{
    flex: none;
    width: 106px;
    padding-left: 3px;
}
.workbench svg{
    width: 10px;
    height: 10px;
}
.btn{
    height: 16px;
    border: 1px solid #b6b6b4;
    border-radius: 2px;
    background: linear-gradient(#f6f6f5, #dcdcda);
}

/* left dock */
.workspace{
    display: flex;
    flex: 1;
    min-height: 0;
}
.panel{
    display: flex;
    flex-direction: column;
    width: 36%;
    min-width: 280px;
    max-width: 287px;
    padding: 0 4px 1px 1px;
}
.panel-title{
    display: flex;
    align-items: center;
    justify-content: space-between;
    height: 15px;
    padding-right: 1px;
}
.panel-title svg{
    width: 7px;
    height: 7px;
}
.tabs{
    display: flex;
    align-items: flex-end;
    height: 17px;
    border-bottom: 1px solid #c2c2c0;
}
.tabs button{
    height: 14px;
    padding: 0 4px;
    border: 1px solid #c2c2c0;
    border-bottom: none;
    background: #efefee;
}
.tabs .current{
    height: 17px;
    margin-bottom: -1px;
    background: #fff;
}
.scroll{
    display: flex;
    flex: 1;
    min-height: 0;
    border: 1px solid #d8d8d6;
    border-width: 1px 1px 1px 0;
}
.tasks{
    display: flex;
    flex-direction: column;
    gap: 6px;
    flex: 1;
    padding: 11px 5px 0 6px;
    overflow: hidden;
    background: linear-gradient(#cbc7c4, #bfbfbf 110px);
}
.close{
    flex: none;
    align-self: center;
    width: 52px;
    margin-bottom: 5px;
}
.bar{
    flex: none;
    width: 8px;
    background: #c4c4c2;
}
.bar i{
    display: block;
    width: 4px;
    height: 18px;
    margin: 9px 2px 0;
    border-radius: 2px;
    background: #747a7b;
}
.main-bar i{
    height: 174px;
}
.task{
    flex: none;
}
.task h2{
    display: flex;
    align-items: center;
    gap: 3px;
    height: 16px;
    padding: 0 2px 0 4px;
    border: 1px solid #dbe9f7;
    border-radius: 2px 2px 0 0;
    background: linear-gradient(90deg, #4a90d9, #a3d0ff);
    color: #fff;
    font: bold 8px/12px "Noto Sans", "Open Sans", sans-serif;
}
.task h2 svg{
    width: 10px;
    height: 10px;
}
.task h2 .fold{
    margin-left: auto;
}
.task-body{
    padding: 6px 9px 9px 8px;
    background: #e8e8e6;
}
.msg{
    font: 7px/13px "Noto Serif", "DejaVu Serif Condensed", serif;
}
.msg a{
    color: #2a2ae0;
}
.solved{
    color: #2f9c35;
}
.task-body label{
    display: flex;
    align-items: center;
    gap: 4px;
    height: 16px;
}
.split{
    display: flex;
    align-items: center;
    justify-content: space-between;
}
.split .btn,
.split .combo{
    flex: none;
    width: 115px;
}
.split .combo{
    width: 119px;
}
.update{
    margin-top: 14px;
}
.filter{
    padding: 2px 0 1px;
}
input[type=checkbox]{
    position: relative;
    flex: none;
    width: 11px;
    height: 11px;
    border: 1px solid #b0b0ae;
    border-radius: 2px;
    background: #f4f4f3;
    appearance: none;
}
input[type=checkbox]:checked::before{
    content: "";
    position: absolute;
    left: 3px;
    top: 0;
    width: 4px;
    height: 7px;
    border: solid #1e2628;
    border-width: 0 2px 2px 0;
    transform: rotate(42deg);
}
.list{
    display: flex;
    height: 120px;
    margin-top: 3px;
    border: 1px solid #c2c2c0;
    background: #fff;
    font-family: "DejaVu Sans Condensed", "DejaVu Sans", sans-serif;
}
.list ul{
    flex: 1;
    padding-left: 3px;
}
.list svg{
    width: 14px;
    height: 14px;
}

/* 3D view */
.viewer{
    display: flex;
    flex-direction: column;
    flex: 1;
    min-width: 0;
    border-left: 1px solid #a9a9b4;
}
.scene{
    flex: 1;
    width: 100%;
    min-height: 0;
    background: linear-gradient(#333366, #9797ad);
}
.scene text{
    font-family: "DejaVu Sans", sans-serif;
}
.angle text{
    font-size: 13px;
    fill: #9b3336;
}
.tags text{
    font-size: 7px;
    font-weight: bold;
    fill: #c9281c;
}
.scene .cube{
    font: 13px "Noto Sans", "Open Sans", sans-serif;
    text-anchor: middle;
    fill: #222;
}
.scene .axis-z{
    font-size: 7px;
    fill: #1414d8;
}
.axes text{
    font-size: 6px;
    fill: #222;
}
.doc-tabs{
    display: flex;
    height: 20px;
    padding-bottom: 1px;
}
.doc-tab{
    display: flex;
    align-items: center;
    gap: 4px;
    padding: 0 4px 0 4px;
    border-right: 1px solid #cfcfcd;
    border-bottom: 1px solid #cfcfcd;
    background: #fff;
}
.doc-tab svg{
    width: 11px;
    height: 11px;
}
.doc-tab button{
    margin-left: 2px;
}
```
